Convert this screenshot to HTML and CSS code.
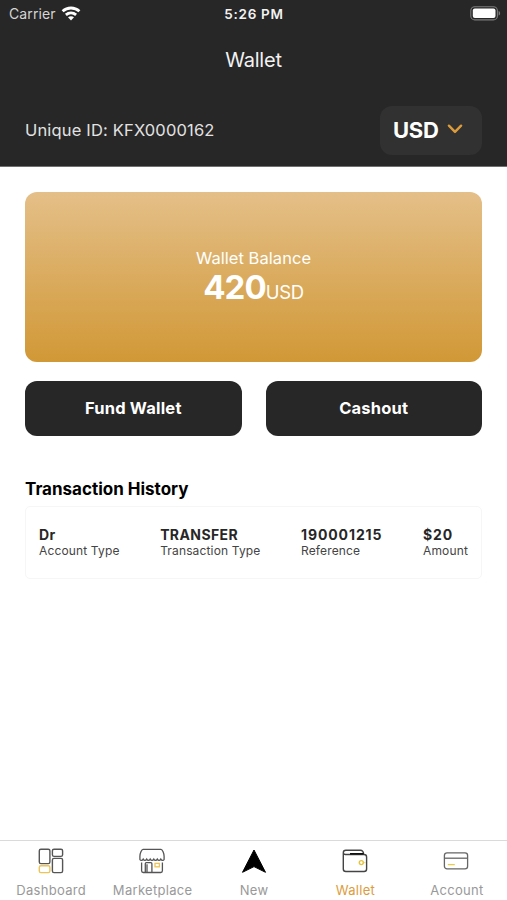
FILE: index.html
```html
<!DOCTYPE html>
<html lang="en">

<head>
    <meta charset="UTF-8">
    <meta name="viewport" content="width=device-width, initial-scale=1.0">
    <title>Wallet</title>
    <link rel="stylesheet" href="styles.css">
</head>

<body>
    <div class="app">
        <header class="header">
            <div class="status">
                <div class="carrier">
                    <span>Carrier</span>
                    <svg width="20" height="15" viewBox="0 0 20 15">
                        <g fill="none" stroke="#fff" stroke-width="2.8">
                            <path d="M1.6 5.3C6.4 .9 13.6 .9 18.4 5.3" />
                            <path d="M4.9 8.9c3-2.6 7.2-2.6 10.2 0" />
                        </g>
                        <path d="M7 11.2c1.8-1.4 4.2-1.4 6 0l-3 3.2z" fill="#fff" />
                    </svg>
                </div>
                <span class="time">5:26 PM</span>
                <div class="battery">
                    <svg width="31" height="15" viewBox="0 0 31 15">
                        <rect x=".8" y=".7" width="26.6" height="13.2" rx="4" fill="none" stroke="#7c7c7c" stroke-width="1.1" />
                        <rect x="2.8" y="2.6" width="22.7" height="9.4" rx="2" fill="#fff" />
                        <path d="M28.6 5c2 .7 2 3.9 0 4.6z" fill="#7c7c7c" />
                    </svg>
                </div>
            </div>
            <h1 class="title">Wallet</h1>
            <div class="user">
                <span class="user-id">Unique ID: KFX0000162</span>
                <div class="currency">
                    <span>USD</span>
                    <svg width="16" height="12" viewBox="0 0 16 12">
                        <path d="M1.9 1.7L8 7.900l6.100-6.200" fill="none" stroke="#dc9c3c" stroke-width="2.400" stroke-linecap="round" stroke-linejoin="round" />
                    </svg>
                </div>
            </div>
        </header>

        <main class="content">
            <div class="balance">
                <p class="balance-label">Wallet Balance</p>
                <p class="balance-value"><b>420</b><span>USD</span></p>
            </div>
            <div class="actions">
                <button class="btn fund">Fund Wallet</button>
                <button class="btn cashout">Cashout</button>
            </div>
            <h2 class="history-title">Transaction History</h2>
            <div class="transaction">
                <div class="cell cell-type">
                    <b>Dr</b>
                    <span>Account Type</span>
                </div>
                <div class="cell cell-transfer">
                    <b>TRANSFER</b>
                    <span>Transaction Type</span>
                </div>
                <div class="cell cell-ref">
                    <b>190001215</b>
                    <span>Reference</span>
                </div>
                <div class="cell cell-amount">
                    <b>$20</b>
                    <span>Amount</span>
                </div>
            </div>
        </main>

        <nav class="tabs">
            <a class="tab">
                <svg width="28" height="28" viewBox="0 0 28 28" fill="none" stroke="#555" stroke-width="1.4">
                    <rect x="2.3" y="2.2" width="10.6" height="14.4" rx="1.6" />
                    <rect x="15.4" y="2.2" width="10.2" height="7.2" rx="1.6" />
                    <rect x="15.4" y="11.4" width="10.2" height="14.2" rx="1.6" />
                    <rect x="2.3" y="18.8" width="10.6" height="6.8" rx="1.6" stroke="#edc457" />
                </svg>
                <span>Dashboard</span>
            </a>
            <a class="tab">
                <svg width="28" height="28" viewBox="0 0 28 28" fill="none" stroke="#555" stroke-width="1.3">
                    <path d="M5 2.4h18c1.4 0 3.1 4.2 3.1 6.8v3.2c-.6 1.4-2.4 1.4-3.3-.3-.9 1.7-2.6 1.7-3.5 0-.9 1.7-2.6 1.7-3.5 0-.9 1.7-2.7 1.7-3.6 0-.9 1.7-2.6 1.7-3.5 0-.9 1.7-2.6 1.7-3.5 0-.9 1.7-2.7 1.7-3.3.3V9.2C1.9 6.6 3.6 2.4 5 2.4z" />
                    <path d="M3.6 15.500v8.300c0 1 .6 1.700 1.600 1.700h17.600c1 0 1.600-.7 1.600-1.700v-8.300" />
                    <path d="M7.300 25.500V16.700c0-.6.400-1 1-1h4.600c.6 0 1 .4 1 1v8.800M9 25.500v-8.300" />
                    <rect x="17" y="16.400" width="4.400" height="3.400" stroke="#edc457" />
                </svg>
                <span>Marketplace</span>
            </a>
            <a class="tab">
                <svg width="28" height="28" viewBox="0 0 28 28">
                    <path d="M14 3L25.500 25.300 14 19.600 2.500 25.300z" fill="#000" stroke="#000" stroke-width="1" stroke-linejoin="round" />
                </svg>
                <span>New</span>
            </a>
            <a class="tab active">
                <svg width="28" height="28" viewBox="0 0 28 28" fill="none" stroke="#444" stroke-width="1.400">
                    <path d="M2.300 6v16c0 1.600 1 2.500 2.500 2.500h18.300c1.500 0 2.500-.9 2.500-2.500V10c0-1.500-1-2.500-2.500-2.500H4.500C3 7.500 2.300 7 2.300 5.800c0-1.700 1-2.500 2.500-2.500h14.700c1.800 0 2.800 1 3.300 4" />
                    <path d="M9 6.800h13.600" stroke="#111" stroke-width="1.600" />
                    <circle cx="20.300" cy="15.600" r="2" stroke="#e5c33c" />
                    <path d="M22.300 15.600h2.300" stroke="#e5c33c" stroke-width=".6" />
                </svg>
                <span>Wallet</span>
            </a>
            <a class="tab">
                <svg width="28" height="28" viewBox="0 0 28 28" fill="none" stroke="#666" stroke-width="1.300">
                    <rect x="2.400" y="5.800" width="23.200" height="16" rx="2.600" />
                    <path d="M2.400 11.200h23.200" />
                    <path d="M5.800 17.600h7" stroke="#e8cc4a" />
                </svg>
                <span>Account</span>
            </a>
        </nav>
    </div>
</body>

</html>
```

FILE: styles.css
```css
* {
    box-sizing: border-box;
    margin: 0;
    padding: 0;
}

body {
    font-family: Inter, "Liberation Sans", sans-serif;
    background: #fff;
    color: #272727;
}

.app {
    display: flex;
    flex-direction: column;
    width: 507px;
    height: 900px;
}

.header {
    height: 167px;
    background: #272727;
    border-bottom: 1px solid #6f6f6f;
    color: #f2f2f2;
}

.status {
    display: grid;
    grid-template-columns: 1fr auto 1fr;
    align-items: center;
    height: 27px;
    padding: 0 6px 0 9px;
}

.carrier {
    display: flex;
    align-items: center;
    gap: 5px;
    font-size: 14px;
    letter-spacing: 0.1px;
    color: #d5d5d5;
}

.time {
    font-size: 13.5px;
    font-weight: 600;
    letter-spacing: 0.7px;
    padding-right: 2px;
}

.battery {
    display: flex;
    justify-content: flex-end;
}

.title {
    font-size: 20px;
    font-weight: 400;
    line-height: 24px;
    letter-spacing: -0.2px;
    margin-top: 21px;
    text-align: center;
}

.user {
    display: flex;
    align-items: center;
    justify-content: space-between;
    margin-top: 34px;
    padding: 0 25px;
}

.user-id {
    padding-bottom: 2px;
    font-size: 16.5px;
    letter-spacing: 0.17px;
    color: #e2e2e2;
}

.currency {
    display: flex;
    align-items: center;
    gap: 8px;
    width: 102px;
    height: 49px;
    padding: 0 0 1px 13px;
    border-radius: 12px;
    background: #313131;
    color: #fff;
    font-size: 22px;
    font-weight: 700;
    letter-spacing: -0.3px;
}

.content {
    flex: 1;
    padding: 25px 25px 0;
}

.balance {
    height: 170px;
    padding-top: 55px;
    border-radius: 12px;
    background: linear-gradient(#e4bf88, #d19836);
    color: #fff;
    text-align: center;
}

.balance-label {
    font-size: 16.5px;
    line-height: 22px;
    letter-spacing: 0.05px;
}

.balance-value {
    font-size: 18.5px;
    line-height: 37px;
    letter-spacing: -0.3px;
}

.balance-value b {
    font-size: 33px;
    font-weight: 700;
    letter-spacing: -0.9px;
}

.actions {
    display: flex;
    gap: 24px;
    margin-top: 19px;
}

.btn {
    flex: 1;
    height: 55px;
    padding-bottom: 2px;
    border: none;
    border-radius: 12px;
    background: #272727;
    color: #fff;
    font-family: inherit;
    font-size: 16.5px;
    font-weight: 700;
    letter-spacing: 0.2px;
}

.history-title {
    margin-top: 42px;
    font-size: 17px;
    font-weight: 700;
    line-height: 22px;
    color: #000;
}

.transaction {
    display: flex;
    justify-content: space-between;
    height: 73px;
    margin-top: 6px;
    padding: 19px 13px 0;
    border: 1px solid #f6f6f6;
    border-radius: 5px;
}

.cell {
    display: flex;
    flex-direction: column;
}

.cell b {
    font-size: 14px;
    font-weight: 700;
    line-height: 17px;
    letter-spacing: 0.4px;
}

.cell-ref b,
.cell-amount b {
    letter-spacing: 0.9px;
}

.cell span {
    font-size: 12px;
    line-height: 15px;
    letter-spacing: 0.15px;
    color: #444;
}

.tabs {
    display: flex;
    height: 60px;
    border-top: 1px solid #dadada;
}

.tab {
    display: flex;
    flex: 1;
    flex-direction: column;
    align-items: center;
    padding-top: 6px;
    font-size: 13px;
    line-height: 16px;
    letter-spacing: 0.3px;
    color: #999;
}

.tab span {
    margin-top: 7px;
    padding-left: 1px;
}

.active {
    color: #dc9c3c;
}
```
